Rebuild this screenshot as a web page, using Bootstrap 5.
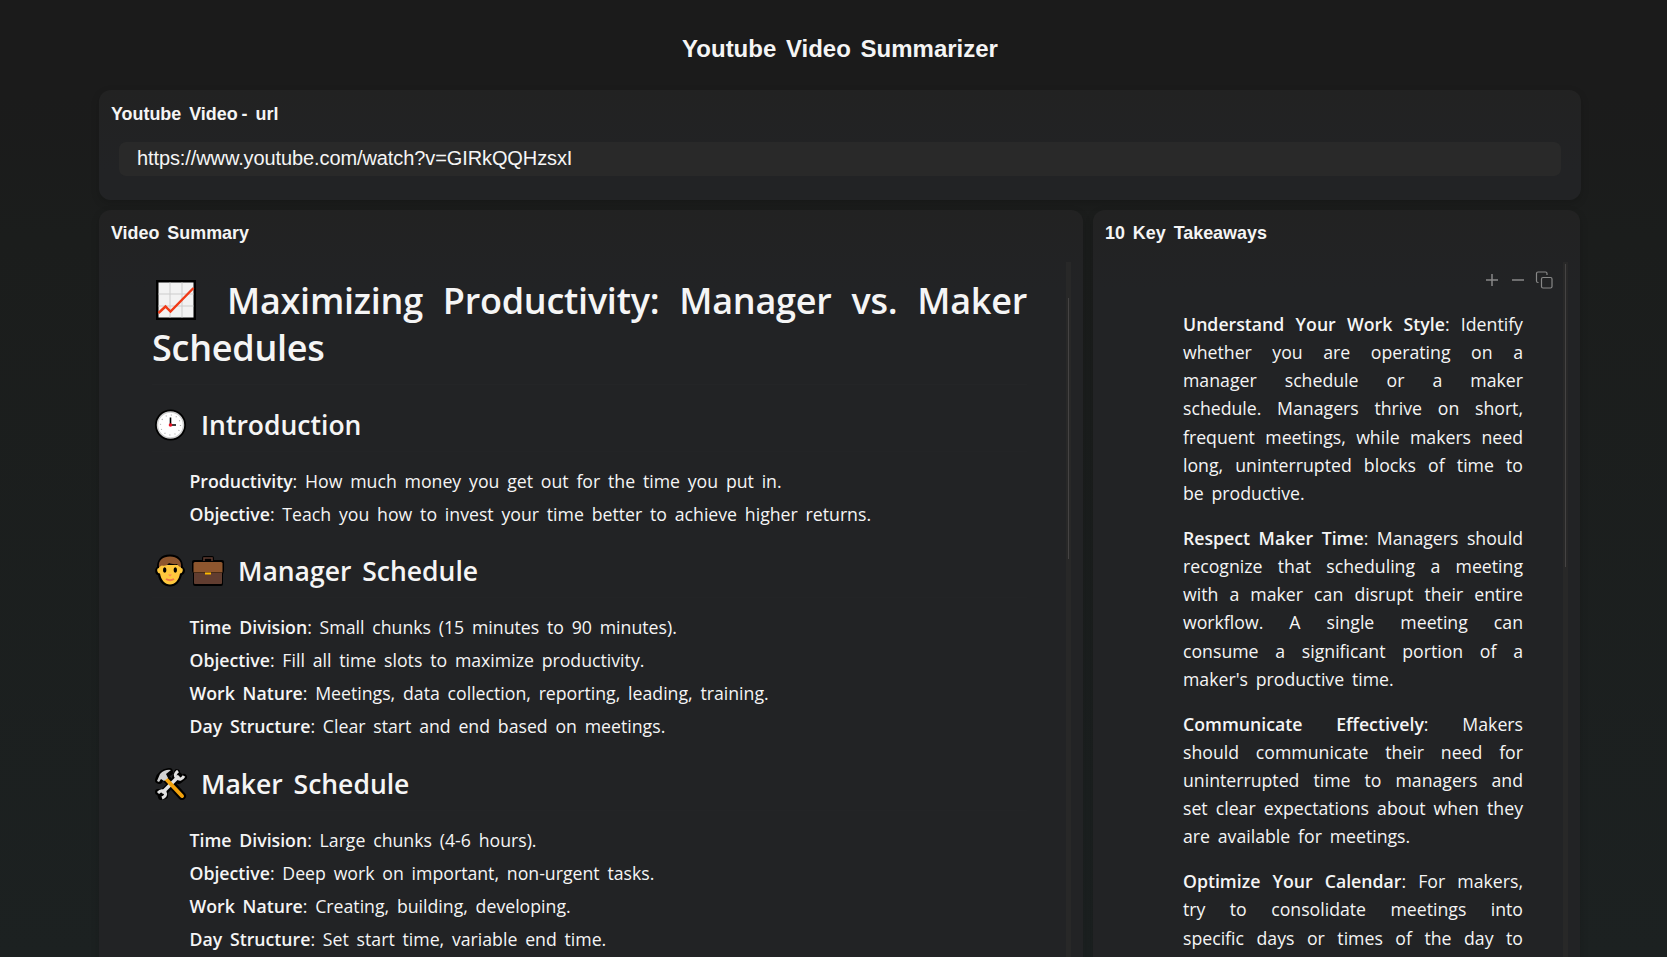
<!DOCTYPE html>
<html lang="en">
<head>
<meta charset="utf-8">
<meta name="viewport" content="width=device-width, initial-scale=1">
<title>Youtube Video Summarizer</title>
<link href="https://cdn.jsdelivr.net/npm/bootstrap@5.3.0/dist/css/bootstrap.min.css" rel="stylesheet">
<style>
html,body{height:100%;overflow:hidden}
body{background:linear-gradient(#1b1b1b,#1b1b1b 10%,#1b1d1c 25%,#1c2121);color:#f5f5f5;font-family:"Liberation Sans",Arial,sans-serif}
.shell{width:1482px;height:957px;margin-left:99px}
.shell>*{flex-shrink:0}
.app-title{font-size:24px;font-weight:700;word-spacing:3px;line-height:28px;padding-top:35px;height:90px}
.panel{background:linear-gradient(#222222,#222325 80px);border-radius:12px;box-shadow:0 3px 8px rgba(0,0,0,.16)}
.panel h2{font-size:17.9px;font-weight:700;line-height:20px;word-spacing:3px;margin:0}
.tight{word-spacing:-1px}
.url-panel{height:110px;padding:14px 20px 0 12px}
.url-box{background:#292929;border:0;border-radius:7px;color:#f5f5f5;height:34px;margin:18px 0 0 8px;padding:0 18px 1px;width:1442px;font-size:20px;letter-spacing:-.1px}
.panels{gap:10px;margin:10px 1px 0 0}
.body-panel{padding:13px 12px 0 12px;height:760px}
.summary-panel{width:984px}
.scroller{height:720px;margin-top:19px;overflow:hidden;font-family:"Open Sans",sans-serif;font-size:17.7px;line-height:28.16px;word-spacing:3.2px}
.track{width:5px;background:#282828}
.thumb{width:1px;background:#454343;margin-left:2px}
.doc{width:875px;margin-left:41px}
.doc h3{font-size:36px;font-weight:600;line-height:47px;letter-spacing:-.25px;margin:15px 0 0;padding-bottom:13px;border-bottom:1px solid #242527}
.doc h4{font-size:26.5px;font-weight:600;line-height:36px;word-spacing:4px;margin:22px 0 0;padding-bottom:8px;border-bottom:1px solid #232426;display:flex;align-items:center}
.doc h4 svg{margin:0 14px 0 3px}
.doc ul{list-style:none;margin:13px 0 0;padding:0 0 0 37.5px}
.doc li{height:33.1px;line-height:33.1px;white-space:nowrap}
b{font-weight:600}
.ln{display:block;text-align:justify;text-align-last:justify;white-space:nowrap;word-spacing:0}
.chart{display:inline-block;vertical-align:-6px;margin:0 11px 0 4px}
.keys{padding-left:78px}
.keys p{width:340px;margin:0 0 16.8px}
.tools{margin:8px 0 20px 301px}
svg{display:block;flex:none}
</style>
</head>
<body>
<main class="shell d-flex flex-column">
<h1 class="app-title text-center m-0">Youtube Video Summarizer</h1>
<section class="panel url-panel"><h2>Youtube <span class="tight">Video -</span> url</h2><input class="url-box d-block" value="https://www.youtube.com/watch?v=GIRkQQHzsxI" aria-label="Youtube Video - url"></section>
<div class="panels d-flex">
<section class="panel body-panel summary-panel"><h2>Video Summary</h2>
<div class="scroller d-flex justify-content-between">
<div class="doc">
<h3><span class="ln"><svg class="chart" width="40" height="40" viewBox="0 0 40 40"><path fill="#000" d="M0 0h40v40H0z"/><path fill="#f2f2f2" d="M2.500 2.500h35v35h-35z"/><path stroke="#ccc" d="M14 2.500v35M26 2.500v35M2.500 14h35M2.500 26h35"/><path d="M2.500 33l7-6.500 5 5L37.500 8" stroke="#f03a17" stroke-width="2.400" fill="none"/></svg> Maximizing Productivity: Manager vs. Maker</span> Schedules</h3>
<h4><svg width="32" height="32" viewBox="0 0 32 32"><circle cx="15.500" cy="16" r="15.500"/><circle cx="15.500" cy="16" r="13" fill="#fff" stroke="#ccc" stroke-width="1.500"/><circle cx="15.500" cy="16" r="10" fill="none" stroke="#aaa" stroke-width="1.200" stroke-dasharray="1 4.236"/><path d="M15.500 16V8.500M15.500 16H21" stroke="#000" stroke-width="1.600"/><circle cx="15.500" cy="16" r="1.800" fill="#e81224"/></svg><span>Introduction</span></h4>
<ul><li><b>Productivity</b>: How much money you get out for the time you put in.</li><li><b>Objective</b>: Teach you how to invest your time better to achieve higher returns.</li></ul>
<h4><svg width="69" height="34" viewBox="0 0 69 34"><path d="M15 .5C5 .5 2 7 2 13-1 15 0 21 3 21 4 28 9 32.500 15 32.500S25 28 27 21c3.500-1 4-6 1-8C28 6 24 .5 15 .5z"/><path fill="#ffc83d" d="M4 11h22v3c3 0 2 5.500-1 5.500C24 26 20 30.500 15 30.500S6 26 5 19.500C2 19.500 1 14 4 14z"/><path fill="#8e562e" d="M4 13.500C3 6 8 2.500 15 2.500s12 4 11 11c-2-1-3-2-4-3.500-3 .5-6 0-8-1-2 3-5 3-7 2.500-1 0-2 1-3 2z"/><ellipse cx="9.700" cy="16" rx="1.700" ry="2.800"/><ellipse cx="20.300" cy="16" rx="1.700" ry="2.800"/><path d="M13 20.500h4l-2 2z" fill="#ff8257"/><path d="M11 25q4 2.500 8 0" stroke="#f0784a" stroke-width="2" fill="none"/><path d="M47 4q0-2 2-2h8q2 0 2 2v2h8q2 0 2 2v9l-1 3v10q0 2-2 2H40q-2 0-2-2V19l-1-2V8q0-2 2-2h8z"/><path d="M49 7V4h8v3" fill="none" stroke="#5e3b31" stroke-width="1.500"/><path d="M39 19h28v10q0 1-1 1H40q-1 0-1-1z" fill="#613d30"/><path d="M40 8h26q1.500 0 1.500 1.500V18.500h-29V9.500Q38.500 8 40 8z" fill="#8e562e"/><path fill="#ffb900" d="M50 18.500h6v2h-6z"/></svg><span>Manager Schedule</span></h4>
<ul><li><b>Time Division</b>: Small chunks (15 minutes to 90 minutes).</li><li><b>Objective</b>: Fill all time slots to maximize productivity.</li><li><b>Work Nature</b>: Meetings, data collection, reporting, leading, training.</li><li><b>Day Structure</b>: Clear start and end based on meetings.</li></ul>
<h4><svg width="32" height="32" viewBox="0 0 32 32"><g fill="none" stroke="#000" stroke-linecap="round" stroke-linejoin="round"><path stroke-width="7" d="M6 27L24 8"/><path stroke-width="6" d="M22 4l-2 6 4 3 5-4M3 24l6 0 1 4-4 1"/><path stroke-width="8" d="M9 8L27 28"/><path stroke-width="8" d="M4 12Q6 5 14 4"/></g><path d="M7 25L24 8" stroke="#e1e1e1" stroke-width="3.500"/><path d="M23 3q-5 4-1 7 4 3 7-2M3 25q4-4 7-1 2 4-3 6" stroke="#e1e1e1" stroke-width="3" fill="none"/><path d="M11 11l16 17" stroke="#f2a20c" stroke-width="4" stroke-linecap="round"/><path d="M2 13l3-7q5-5 11-4l-5 4 2 4-4 3-3-2-2 3z" fill="#d0d0d0"/></svg><span>Maker Schedule</span></h4>
<ul><li><b>Time Division</b>: Large chunks (4-6 hours).</li><li><b>Objective</b>: Deep work on important, non-urgent tasks.</li><li><b>Work Nature</b>: Creating, building, developing.</li><li><b>Day Structure</b>: Set start time, variable end time.</li></ul>
</div>
<div class="track"><div class="thumb" style="height:261px;margin-top:36px"></div></div>
</div></section>
<section class="panel body-panel flex-grow-1"><h2>10 Key Takeaways</h2>
<div class="scroller d-flex justify-content-between">
<div class="keys flex-grow-1">
<svg class="tools" width="70" height="20" viewBox="0 0 70 20" fill="none" stroke="#888"><path stroke-width="1.500" d="M2 10h12M8 4v12M28 10h12"/><rect x="57.500" y="7.500" width="10.500" height="10.500" rx="1.500" stroke-width="1.200"/><path stroke-width="1.200" d="M54.500 12.500h-.5q-1.500 0-1.500-1.500V3.500Q52.500 2 54 2h7.500Q63 2 63 3.500V5"/></svg>
<p><span class="ln"><b>Understand Your Work Style</b>: Identify</span><span class="ln">whether you are operating on a</span><span class="ln">manager schedule or a maker</span><span class="ln">schedule. Managers thrive on short,</span><span class="ln">frequent meetings, while makers need</span><span class="ln">long, uninterrupted blocks of time to</span>be productive.</p>
<p><span class="ln"><b>Respect Maker Time</b>: Managers should</span><span class="ln">recognize that scheduling a meeting</span><span class="ln">with a maker can disrupt their entire</span><span class="ln">workflow. A single meeting can</span><span class="ln">consume a significant portion of a</span>maker's productive time.</p>
<p><span class="ln"><b>Communicate Effectively</b>: Makers</span><span class="ln">should communicate their need for</span><span class="ln">uninterrupted time to managers and</span><span class="ln">set clear expectations about when they</span>are available for meetings.</p>
<p><span class="ln"><b>Optimize Your Calendar</b>: For makers,</span><span class="ln">try to consolidate meetings into</span><span class="ln">specific days or times of the day to</span></p>
</div>
<div class="track"><div class="thumb" style="height:303px;margin-top:2px"></div></div>
</div></section>
</div>
</main>
<script src="https://cdn.jsdelivr.net/npm/bootstrap@5.3.0/dist/js/bootstrap.bundle.min.js"></script>
</body>
</html>
